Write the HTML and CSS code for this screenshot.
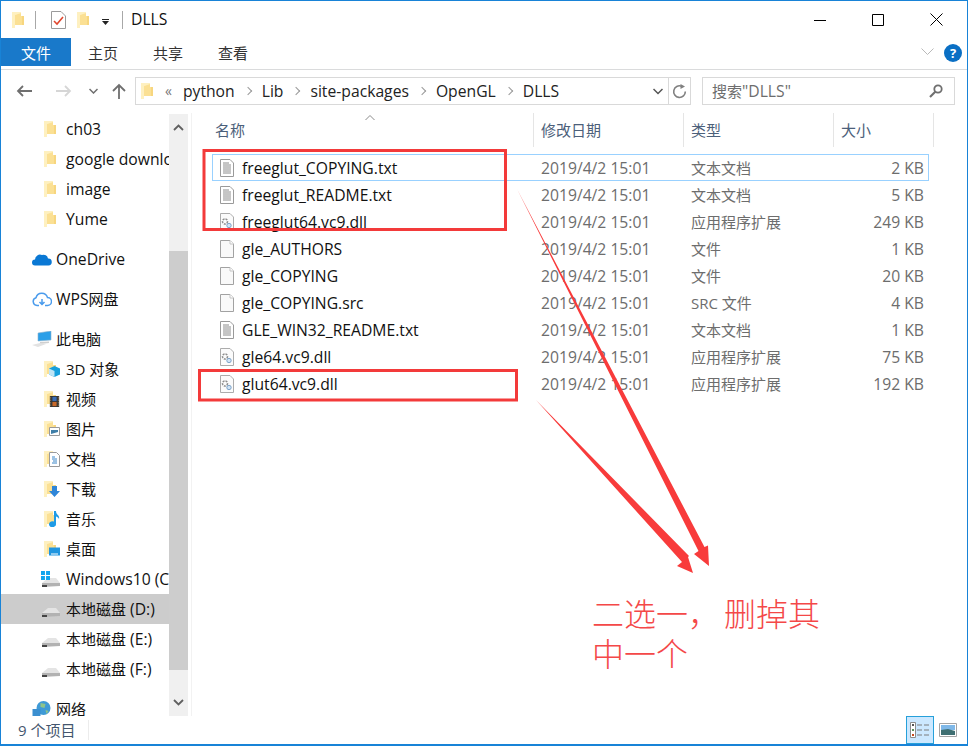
FILE: index.html
```html
<!DOCTYPE html>
<html lang="zh-CN">
<head>
    <meta charset="UTF-8">
    <title>DLLS</title>
    <link rel="stylesheet" href="styles.css">
</head>
<body>
    <svg class="defs" width="0" height="0">
        <symbol id="folder" viewBox="0 0 12 16">
            <path d="M0 0H9V4H12V13H3V16H0Z" fill="#fde9a8"/>
            <path d="M3 3L9 1V4H12V13H3Z" fill="#fbe094"/>
            <path d="M0 0V16H3V3L9 1V0Z" fill="#fef0c0"/>
            <path d="M10 4H12V13H10Z" fill="#f7d67f"/>
        </symbol>
        <symbol id="doc-lines" viewBox="0 0 14 18">
            <path d="M.5.5H10L13.500 4V17.500H.5Z" fill="#fff" stroke="#9a9a9a"/>
            <path d="M3 4H9M3 6H11M3 8H11M3 10H11M3 12H11M3 14H11" stroke="#8c8c8c"/>
        </symbol>
        <symbol id="doc-blank" viewBox="0 0 14 18">
            <path d="M.5.5H10L13.500 4V17.500H.5Z" fill="#f9f9f9" stroke="#a2a2a2"/>
            <path d="M10 .5V4H13.500" fill="#fff" stroke="#c4c4c4"/>
        </symbol>
        <symbol id="doc-dll" viewBox="0 0 14 18">
            <path d="M.5.5H10L13.500 4V17.500H.5Z" fill="#fbfbfb" stroke="#acacac"/>
            <circle cx="5" cy="8.500" r="2.500" fill="none" stroke="#8d8d8d" stroke-width="1.500" stroke-dasharray="2 1"/>
            <circle cx="9" cy="12.500" r="2.200" fill="#cfe3f5" stroke="#7fa4c9"/>
        </symbol>
        <symbol id="drive" viewBox="0 0 18 10">
            <path d="M0 6L6 1H14L18 6Z" fill="#e4e4e4"/>
            <path d="M0 6H18V9L0 10Z" fill="#b2b2b2"/>
            <path d="M0 8H5V10H0Z" fill="#444"/>
        </symbol>
    </svg>

    <div class="window">
        <div class="titlebar">
            <svg class="ico-folder"><use href="#folder"/></svg>
            <span class="tb-sep"></span>
            <svg class="qa-check" width="15" height="18" viewBox="0 0 15 18">
                <path d="M.5.5H10L14.500 5V17.500H.5Z" fill="#fff" stroke="#9b9b9b"/>
                <path d="M3 10L6 13L12 6" fill="none" stroke="#e0472f" stroke-width="1.600"/>
            </svg>
            <svg class="ico-folder qa-folder"><use href="#folder"/></svg>
            <svg class="qa-drop" width="7" height="6" viewBox="0 0 7 6">
                <path d="M0 0H7V1H0ZM0 2H7L3.500 6Z" fill="#222"/>
            </svg>
            <span class="tb-sep tb-sep2"></span>
            <span class="title">DLLS</span>
            <div class="win-btns">
                <svg width="12" height="12" viewBox="0 0 12 12"><path d="M0 6.500H12" stroke="#000"/></svg>
                <svg width="12" height="12" viewBox="0 0 12 12"><path d="M.5.5H11.500V11.500H.5Z" fill="none" stroke="#000"/></svg>
                <svg width="13" height="13" viewBox="0 0 13 13"><path d="M.5.5L12.500 12.500M12.500.5L.5 12.500" stroke="#000"/></svg>
            </div>
        </div>

        <div class="ribbon">
            <span class="tab tab-file">文件</span>
            <span class="tab">主页</span>
            <span class="tab">共享</span>
            <span class="tab">查看</span>
            <svg class="rib-chev" width="13" height="8" viewBox="0 0 13 8"><path d="M.5.5L6.500 6.500L12.500.5" fill="none" stroke="#b9b9b9"/></svg>
            <span class="help">?</span>
        </div>

        <div class="addr-row">
            <div class="nav">
                <svg width="16" height="12" viewBox="0 0 16 12"><path d="M16 6H2M7 1L2 6L7 11" fill="none" stroke="#6f6f6f" stroke-width="1.800"/></svg>
                <svg class="nav-fwd" width="16" height="12" viewBox="0 0 16 12"><path d="M0 6H14M9 1L14 6L9 11" fill="none" stroke="#d6d6d6" stroke-width="1.800"/></svg>
                <svg class="nav-down" width="9" height="6" viewBox="0 0 9 6"><path d="M.5 1L4.500 5L8.500 1" fill="none" stroke="#6f6f6f" stroke-width="1.500"/></svg>
                <svg class="nav-up" width="14" height="16" viewBox="0 0 14 16"><path d="M7 16V2M1 8L7 2L13 8" fill="none" stroke="#6f6f6f" stroke-width="1.800"/></svg>
            </div>
            <div class="addr">
                <svg class="ico-folder"><use href="#folder"/></svg>
                <span class="crumb-more">«</span>
                <span class="crumb">python</span>
                <span class="crumb-sep"></span>
                <span class="crumb">Lib</span>
                <span class="crumb-sep"></span>
                <span class="crumb">site-packages</span>
                <span class="crumb-sep"></span>
                <span class="crumb">OpenGL</span>
                <span class="crumb-sep"></span>
                <span class="crumb">DLLS</span>
                <svg class="addr-drop" width="10" height="7" viewBox="0 0 10 7"><path d="M.5 1L5 5.500L9.500 1" fill="none" stroke="#555" stroke-width="1.500"/></svg>
                <span class="addr-refresh">
                    <svg width="15" height="15" viewBox="0 0 15 15"><path d="M9.500 2.200A5.800 5.800 0 1 0 13.300 7.500" fill="none" stroke="#808080" stroke-width="1.600"/><path d="M8.500 0V5L13 2.500Z" fill="#808080"/></svg>
                </span>
            </div>
            <div class="search">
                <span><span class="cn">搜索</span>"DLLS"</span>
                <svg width="14" height="14" viewBox="0 0 14 14"><circle cx="9" cy="5" r="3.700" fill="none" stroke="#6f6f6f" stroke-width="1.800"/><path d="M6.500 7.500L1 13" stroke="#6f6f6f" stroke-width="2.200"/></svg>
            </div>
        </div>

        <div class="body">
            <div class="sidebar">
                <div class="nav-item deep"><svg class="ico-folder"><use href="#folder"/></svg>ch03</div>
                <div class="nav-item deep"><svg class="ico-folder"><use href="#folder"/></svg>google downloads</div>
                <div class="nav-item deep"><svg class="ico-folder"><use href="#folder"/></svg>image</div>
                <div class="nav-item deep"><svg class="ico-folder"><use href="#folder"/></svg>Yume</div>

                <div class="nav-item top group">
                    <svg class="ico-top" viewBox="0 0 20 13"><path d="M3 13A3 3 0 0 1 3 7A5 5 0 0 1 10 2.500A4.500 4.500 0 0 1 16 6A3.500 3.500 0 0 1 16.500 13Z" fill="#0a78d4"/></svg>
                    OneDrive
                </div>
                <div class="nav-item top group">
                    <svg class="ico-top" viewBox="0 0 20 15"><path d="M5 14A4 4 0 0 1 4 6.200A6 6 0 0 1 15.500 6A4 4 0 0 1 15.500 14H13M5 14H7M10 7.500V13M7.500 10.500L10 13L12.500 10.500" fill="none" stroke="#4a9bec" stroke-width="1.500"/></svg>
                    <span>WPS<span class="cn">网盘</span></span>
                </div>
                <div class="nav-item top group cn">
                    <svg class="ico-top pc" viewBox="0 0 20 16"><path d="M6 2L19 0V9L6 10Z" fill="#2b9fe8" stroke="#8fb4cc" stroke-width=".6"/><path d="M8 11L17 10.500V12L8 13Z" fill="#cfcfcf"/><path d="M0 14L8 12L14 13L6 16Z" fill="#e2e2e2"/></svg>
                    此电脑
                </div>
                <div class="nav-item deep cn">
                    <span class="lib"><svg class="ico-folder"><use href="#folder"/></svg>
                        <svg class="lib-over" viewBox="0 0 11 11"><path d="M5.500 0L11 2.500V8.500L5.500 11L0 8.500V2.500Z" fill="#17a0dd"/><path d="M0 2.500L5.500 5V11L0 8.500Z" fill="#bfe4f5"/></svg></span>
                    3D 对象
                </div>
                <div class="nav-item deep cn">
                    <span class="lib"><svg class="ico-folder"><use href="#folder"/></svg>
                        <svg class="lib-over" viewBox="0 0 11 13"><path d="M0 0H11V13H0Z" fill="#333"/><path d="M3 1H8V6H3Z" fill="#3b6fb8"/><path d="M3 7H8V12H3Z" fill="#c8692a"/><path d="M1 1V12M10 1V12" stroke="#c9a36b" stroke-dasharray="1 1"/></svg></span>
                    视频
                </div>
                <div class="nav-item deep cn">
                    <span class="lib"><svg class="ico-folder"><use href="#folder"/></svg>
                        <svg class="lib-over" viewBox="0 0 11 9"><path d="M.5.5H10.500V8.500H.5Z" fill="#fff" stroke="#9a9a9a"/><path d="M2 3H9V5L2 7Z" fill="#3f7fa8"/></svg></span>
                    图片
                </div>
                <div class="nav-item deep cn">
                    <span class="lib"><svg class="ico-folder"><use href="#folder"/></svg>
                        <svg class="lib-over doc" viewBox="0 0 11 15"><path d="M.5.5H7.500L10.500 3.500V14.500H.5Z" fill="#fff" stroke="#9a9a9a"/><path d="M3 5H6M3 7H8M4 9H8M3 11H8" stroke="#3b86c8"/></svg></span>
                    文档
                </div>
                <div class="nav-item deep cn">
                    <span class="lib"><svg class="ico-folder"><use href="#folder"/></svg>
                        <svg class="lib-over" viewBox="0 0 11 11"><path d="M3 0H8V5H11L5.500 11L0 5H3Z" fill="#2f86d8"/></svg></span>
                    下载
                </div>
                <div class="nav-item deep cn">
                    <span class="lib"><svg class="ico-folder"><use href="#folder"/></svg>
                        <svg class="lib-over note-ico" viewBox="0 0 11 16"><path d="M5 0H7C7 4 11 4 10 8C9 6 8 6 7 5.500V13A3.500 3 0 1 1 5 10.500Z" fill="#1e9be6"/></svg></span>
                    音乐
                </div>
                <div class="nav-item deep cn">
                    <span class="lib"><svg class="ico-folder"><use href="#folder"/></svg>
                        <svg class="lib-over" viewBox="0 0 11 8"><path d="M0 0H11V8H0Z" fill="#2196e0"/><path d="M2 6H9V7H2Z" fill="#fff"/></svg></span>
                    桌面
                </div>
                <div class="nav-item deep drive">
                    <svg class="win-logo" viewBox="0 0 8 8"><path d="M0 0H3.500V3.500H0ZM4.500 0H8V3.500H4.500ZM0 4.500H3.500V8H0ZM4.500 4.500H8V8H4.500Z" fill="#12a5ee"/></svg>
                    <svg class="ico-drive"><use href="#drive"/></svg>
                    Windows10 (C:)
                </div>
                <div class="nav-item deep drive active"><svg class="ico-drive"><use href="#drive"/></svg><span><span class="cn">本地磁盘</span> (D:)</span></div>
                <div class="nav-item deep drive"><svg class="ico-drive"><use href="#drive"/></svg><span><span class="cn">本地磁盘</span> (E:)</span></div>
                <div class="nav-item deep drive"><svg class="ico-drive"><use href="#drive"/></svg><span><span class="cn">本地磁盘</span> (F:)</span></div>
                <div class="nav-item top group cn">
                    <svg class="ico-top" viewBox="0 0 19 16"><circle cx="11" cy="7" r="7" fill="#3f9ad6"/><path d="M8 2L13 3L12 7L8 6ZM13 9L16 10L14 13Z" fill="#8fc48a"/><path d="M0 8H8V15H0Z" fill="#3b8fd0"/></svg>
                    网络
                </div>
            </div>

            <div class="scroll">
                <svg width="11" height="7" viewBox="0 0 11 7"><path d="M1 6L5.500 1.500L10 6" fill="none" stroke="#606060" stroke-width="1.800"/></svg>
                <div class="thumb"></div>
                <svg width="11" height="7" viewBox="0 0 11 7"><path d="M1 1L5.500 5.500L10 1" fill="none" stroke="#606060" stroke-width="1.800"/></svg>
            </div>

            <div class="main">
                <div class="head">
                    <div class="col col-name">名称<svg class="sort" width="10" height="5" viewBox="0 0 10 5"><path d="M.5 5L5 .5L9.500 5" fill="none" stroke="#8a8a8a"/></svg></div>
                    <div class="col">修改日期</div>
                    <div class="col">类型</div>
                    <div class="col">大小</div>
                </div>

                <div class="row selected">
                    <div class="name"><svg class="ico-file"><use href="#doc-lines"/></svg>freeglut_COPYING.txt</div>
                    <div class="meta">2019/4/2 15:01</div><div class="meta cn">文本文档</div><div class="meta size">2 KB</div>
                </div>
                <div class="row">
                    <div class="name"><svg class="ico-file"><use href="#doc-lines"/></svg>freeglut_README.txt</div>
                    <div class="meta">2019/4/2 15:01</div><div class="meta cn">文本文档</div><div class="meta size">5 KB</div>
                </div>
                <div class="row">
                    <div class="name"><svg class="ico-file"><use href="#doc-dll"/></svg>freeglut64.vc9.dll</div>
                    <div class="meta">2019/4/2 15:01</div><div class="meta cn">应用程序扩展</div><div class="meta size">249 KB</div>
                </div>
                <div class="row">
                    <div class="name"><svg class="ico-file"><use href="#doc-blank"/></svg>gle_AUTHORS</div>
                    <div class="meta">2019/4/2 15:01</div><div class="meta cn">文件</div><div class="meta size">1 KB</div>
                </div>
                <div class="row">
                    <div class="name"><svg class="ico-file"><use href="#doc-blank"/></svg>gle_COPYING</div>
                    <div class="meta">2019/4/2 15:01</div><div class="meta cn">文件</div><div class="meta size">20 KB</div>
                </div>
                <div class="row">
                    <div class="name"><svg class="ico-file"><use href="#doc-blank"/></svg>gle_COPYING.src</div>
                    <div class="meta">2019/4/2 15:01</div><div class="meta cn">SRC 文件</div><div class="meta size">4 KB</div>
                </div>
                <div class="row">
                    <div class="name"><svg class="ico-file"><use href="#doc-lines"/></svg>GLE_WIN32_README.txt</div>
                    <div class="meta">2019/4/2 15:01</div><div class="meta cn">文本文档</div><div class="meta size">1 KB</div>
                </div>
                <div class="row">
                    <div class="name"><svg class="ico-file"><use href="#doc-dll"/></svg>gle64.vc9.dll</div>
                    <div class="meta">2019/4/2 15:01</div><div class="meta cn">应用程序扩展</div><div class="meta size">75 KB</div>
                </div>
                <div class="row">
                    <div class="name"><svg class="ico-file"><use href="#doc-dll"/></svg>glut64.vc9.dll</div>
                    <div class="meta">2019/4/2 15:01</div><div class="meta cn">应用程序扩展</div><div class="meta size">192 KB</div>
                </div>
            </div>
        </div>

        <div class="status">
            <span class="status-text cn">9 个项目</span>
            <div class="views">
                <span class="view on">
                    <svg width="20" height="16" viewBox="0 0 20 16"><path d="M.5.5H5.500V15.500H.5Z" fill="#fff" stroke="#8d8d8d"/><path d="M2 2H4V4H2Z" fill="#555"/><path d="M2 7H4V9H2Z" fill="#5a8f5a"/><path d="M2 12H4V14H2Z" fill="#c8491e"/><path d="M7 3H12M14 3H19M7 8H12M14 8H19M7 13H12M14 13H19" stroke="#7d7d7d"/></svg>
                </span>
                <span class="view">
                    <svg width="18" height="14" viewBox="0 0 18 14"><path d="M.5.5H17.500V13.500H.5Z" fill="#fff" stroke="#a4a4a4"/><path d="M2 2H16V7H2Z" fill="#7fb8e8"/><path d="M2 7L9 6L16 8V12H2Z" fill="#3f6f72"/></svg>
                </span>
            </div>
        </div>

        <svg class="marks" width="968" height="746" viewBox="0 0 968 746">
            <path class="box" d="M204 150.500H505.500V229.500H204Z"/>
            <path class="box" d="M199.500 370.500H516.500V400H199.500Z"/>
            <path class="arrow" d="M517 189L704.500 547L708 545.500L709 566L694 554L698.500 551Z"/>
            <path class="arrow" d="M536 400L689 556L688 557L693 573L677 566L682 562Z"/>
        </svg>
        <div class="note">二选一，<span class="note-gap">删掉其</span><br>中一个</div>
    </div>
</body>
</html>
```

FILE: styles.css
```css
html, body {
    margin: 0;
    padding: 0;
}
body {
    font-family: "Open Sans", "Noto Sans CJK SC", sans-serif;
    font-size: 15.7px;
    line-height: 20px;
    color: #111;
    background: #fff;
}
.cn {
    font-size: 15px;
}
.defs {
    position: absolute;
}
svg {
    flex: none;
    display: block;
}
.window {
    position: relative;
    box-sizing: border-box;
    width: 968px;
    height: 746px;
    border: 1px solid #1883d7;
    border-bottom-width: 2px;
    display: flex;
    flex-direction: column;
    overflow: hidden;
}
.ico-folder {
    width: 12px;
    height: 16px;
}

/* title bar */
.titlebar {
    height: 37px;
    display: flex;
    align-items: center;
    padding-left: 11px;
}
.tb-sep {
    width: 1px;
    height: 18px;
    background: #a8a8a8;
    margin-left: 11px;
}
.qa-check {
    margin-left: 15px;
}
.qa-folder {
    margin-left: 11px;
}
.qa-drop {
    margin-left: 13px;
    margin-top: 4px;
}
.tb-sep2 {
    margin-left: 13px;
}
.title {
    margin-left: 8px;
    margin-top: -1px;
}
.win-btns {
    margin-left: auto;
    margin-right: 24px;
    display: flex;
    align-items: center;
    gap: 46px;
}

/* ribbon */
.ribbon {
    height: 31px;
    border-bottom: 1px solid #dadbdc;
    display: flex;
    align-items: flex-start;
    gap: 35px;
}
.tab {
    height: 28px;
    line-height: 30px;
    font-size: 15px;
    color: #333;
}
.tab-file {
    width: 70px;
    margin-right: -18px;
    background: #1979ca;
    color: #fff;
    text-align: center;
}
.rib-chev {
    margin-left: auto;
    margin-top: 10px;
    margin-right: -25px;
}
.help {
    width: 18px;
    height: 18px;
    margin-top: 6px;
    margin-right: 5px;
    border-radius: 50%;
    background: #0a6fc4;
    color: #fff;
    font-size: 13px;
    font-weight: 700;
    line-height: 18px;
    text-align: center;
}

/* address row */
.addr-row {
    height: 43px;
    display: flex;
    align-items: flex-start;
    padding-top: 7px;
    box-sizing: border-box;
}
.nav {
    width: 134px;
    height: 28px;
    display: flex;
    align-items: center;
    padding-left: 15px;
    box-sizing: border-box;
}
.nav-fwd {
    margin-left: 24px;
}
.nav-down {
    margin-left: 17px;
}
.nav-up {
    margin-left: 14px;
}
.addr {
    box-sizing: border-box;
    width: 556px;
    height: 28px;
    border: 1px solid #d9d9d9;
    display: flex;
    align-items: center;
    padding-left: 5px;
}
.crumb-more {
    margin-left: 12px;
    margin-right: 11px;
    color: #777;
    font-size: 14px;
}
.crumb {
    color: #222;
}
.crumb-sep {
    width: 5px;
    height: 5px;
    margin: 0 11px 0 10px;
    border-top: 1.500px solid #999;
    border-right: 1.500px solid #999;
    transform: rotate(45deg);
}
.addr-drop {
    margin-left: auto;
    margin-right: 5px;
}
.addr-refresh {
    width: 21px;
    height: 26px;
    border-left: 1px solid #d9d9d9;
    display: flex;
    align-items: center;
    justify-content: center;
}
.search {
    box-sizing: border-box;
    width: 253px;
    height: 28px;
    margin-left: 11px;
    border: 1px solid #d9d9d9;
    display: flex;
    align-items: center;
    justify-content: space-between;
    padding: 0 11px 0 9px;
    color: #6d6d6d;
}

/* body */
.body {
    flex: 1;
    min-height: 0;
    display: flex;
}
.sidebar {
    width: 168px;
    padding-top: 1px;
    overflow: hidden;
    flex: none;
}
.nav-item {
    height: 30px;
    display: flex;
    align-items: center;
    white-space: nowrap;
    position: relative;
}
.nav-item.deep {
    padding-left: 43px;
    gap: 10px;
}
.nav-item.top {
    padding-left: 31px;
    gap: 4px;
}
.nav-item.group {
    margin-top: 10px;
}
.nav-item.active {
    background: #cccccc;
}
.ico-top {
    width: 20px;
    height: 16px;
}
.lib {
    position: relative;
    width: 12px;
    height: 16px;
    flex: none;
}
.lib-over {
    position: absolute;
    left: 5px;
    bottom: 0;
    width: 11px;
    height: 11px;
}
.lib-over.doc {
    height: 15px;
}
.lib-over.note-ico {
    height: 16px;
}
.nav-item.drive {
    padding-left: 41px;
    gap: 6px;
}
.ico-drive {
    width: 18px;
    height: 10px;
    margin-top: 5px;
}
.win-logo {
    position: absolute;
    left: 40px;
    top: 7px;
    width: 9px;
    height: 9px;
}
.scroll {
    width: 19px;
    margin-left: 0;
    margin-top: 1px;
    background: #f0f0f0;
    display: flex;
    flex-direction: column;
    align-items: center;
    padding: 10px 0 10px;
    box-sizing: border-box;
    flex: none;
}
.thumb {
    width: 19px;
    height: 429px;
    margin: 120px 0 29px;
    background: #cdcdcd;
}
.main {
    flex: 1;
    padding-left: 20px;
    border-left: 1px solid #f2f2f2;
    margin-left: 3px;
    min-width: 0;
}
.head {
    width: 722px;
    height: 34px;
    margin-bottom: 7px;
    display: grid;
    grid-template-columns: 322px 150px 150px 100px;
}
.col {
    box-sizing: border-box;
    height: 34px;
    line-height: 35px;
    font-size: 15px;
    border-right: 1px solid #e5e5e5;
    padding-left: 7px;
    color: #4c607a;
    position: relative;
}
.col-name {
    padding-left: 3px;
}
.sort {
    position: absolute;
    left: 153px;
    top: 2px;
}
.row {
    box-sizing: border-box;
    width: 717px;
    height: 27px;
    display: grid;
    grid-template-columns: 322px 150px 149px 1fr;
    align-items: center;
    border: 1px solid transparent;
}
.row.selected {
    border-color: #99d1ff;
}
.name {
    display: flex;
    align-items: center;
    gap: 8px;
    padding-left: 7px;
    white-space: nowrap;
}
.ico-file {
    width: 14px;
    height: 18px;
}
.meta {
    padding-left: 6px;
    color: #6d6d6d;
    white-space: nowrap;
}
.meta.size {
    padding: 0 4px 0 0;
    text-align: right;
}

/* status */
.status {
    height: 28px;
    display: flex;
    align-items: center;
    padding-left: 17px;
    color: #44566e;
}
.status-text {
    box-sizing: border-box;
    width: 71px;
    border-right: 1px solid #ececec;
}
.views {
    margin-left: auto;
    margin-right: 10px;
    display: flex;
    align-items: center;
    gap: 5px;
}
.view {
    box-sizing: border-box;
    width: 28px;
    height: 28px;
    border: 1px solid transparent;
    display: flex;
    align-items: center;
    justify-content: center;
}
.view.on {
    background: #cce8ff;
    border-color: #26a0da;
}
.view:last-child {
    width: 18px;
}

/* red annotations */
.marks {
    position: absolute;
    left: -1px;
    top: -1px;
    pointer-events: none;
}
.box {
    fill: none;
    stroke: #f33a3a;
    stroke-width: 3;
}
.arrow {
    fill: #f83b3b;
}
.note {
    position: absolute;
    left: 591px;
    top: 593px;
    font-size: 32px;
    font-weight: 300;
    line-height: 40px;
    color: #f44848;
    white-space: nowrap;
}
.note-gap {
    margin-left: 4px;
}
```
